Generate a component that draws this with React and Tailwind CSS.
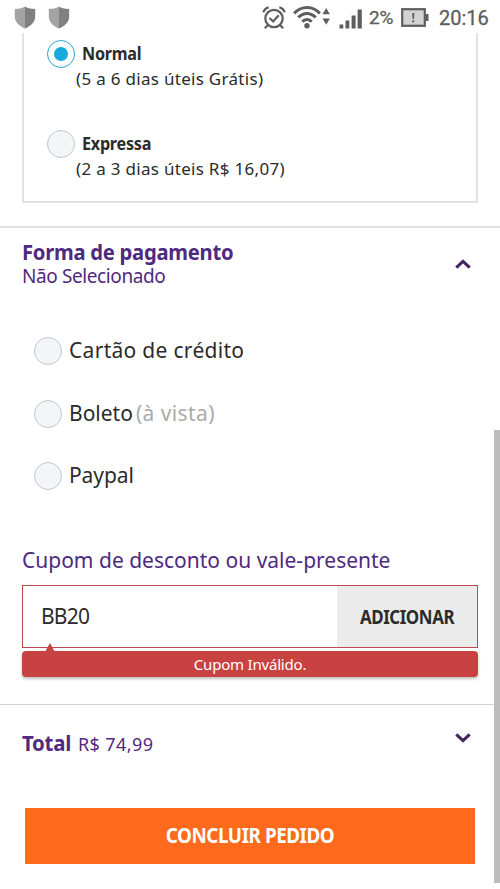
import clsx from "clsx";

const shippingOptions = [
  { name: "Normal", detail: "(5 a 6 dias úteis Grátis)", checked: true },
  { name: "Expressa", detail: "(2 a 3 dias úteis R$ 16,07)", checked: false },
];

const paymentOptions = [
  { name: "Cartão de crédito", style: "tracking-[0.3px]" },
  { name: "Boleto", hint: "(à vista)", style: "tracking-[0px]" },
  { name: "Paypal", style: "tracking-[-0.1px]" },
];

const ShieldIcon = () => (
  <svg width="22" height="23" viewBox="0 0 22 23">
    <path d="M11 0.5C8 2.3 4.5 3 0.8 3v7.5c0 5.2 4 9.5 10.2 12z" fill="#a3a3a3" />
    <path d="M11 0.5c3 1.8 6.5 2.5 10.2 2.5v7.5c0 5.2-4 9.5-10.2 12z" fill="#808080" />
  </svg>
);

const AlarmIcon = () => (
  <svg width="24" height="24" viewBox="0 0 24 24" fill="none" stroke="#5e5e5e" strokeWidth="2.2">
    <circle cx="12" cy="12.5" r="8.7" />
    <path d="M1.3 6.3C2.3 3.6 4.3 1.9 6.7 1.4M22.7 6.3c-1-2.7-3-4.4-5.4-4.9M5.8 19.2l-3 3M18.2 19.2l3 3M7.5 12l3.7 3.5 5.5-6.2" />
  </svg>
);

const WifiIcon = () => (
  <svg width="38" height="24" viewBox="0 0 38 24" fill="none" stroke="#5e5e5e" strokeWidth="3">
    <path d="M1.2 8.4c7-8 18.6-8 25.6 0M5.3 12.6c5-5.5 12.4-5.5 17.4 0M9.3 16.7c2.7-2.9 6.7-2.9 9.4 0" />
    <circle cx="14" cy="20.8" r="2.7" fill="#5e5e5e" stroke="none" />
    <path d="M29.5 9.2 33.2 3l3.7 6.2zM29.5 13.5h7.4l-3.7 6.2z" fill="#5e5e5e" stroke="none" />
  </svg>
);

const SignalIcon = () => (
  <svg width="24" height="20" viewBox="0 0 24 20" fill="#5e5e5e">
    <rect x="0.5" y="15.5" width="3.8" height="4" />
    <rect x="6.5" y="11.5" width="3.8" height="8" />
    <rect x="12.6" y="6.5" width="4" height="13" />
    <rect x="18.6" y="0.5" width="4.2" height="19" />
  </svg>
);

const BatteryIcon = () => (
  <svg width="28" height="20" viewBox="0 0 28 20">
    <rect x="1.2" y="1.2" width="22.6" height="16.6" fill="#d2d2d2" stroke="#5e5e5e" strokeWidth="2.2" />
    <rect x="24.5" y="6" width="3" height="7" fill="#5e5e5e" />
    <path d="M11.2 5h2.2l-.4 6h-1.4zM11.3 12.3h2v2h-2z" fill="#5e5e5e" />
  </svg>
);

const Chevron = ({ up }) => (
  <svg
    width="16"
    height="12"
    viewBox="0 0 16 12"
    className={clsx("shrink-0", up && "rotate-180")}
    fill="none"
    stroke="#432763"
    strokeWidth="3"
  >
    <path d="M1.3 2.3 8 8.7l6.7-6.4" />
  </svg>
);

const Radio = ({ checked }) => (
  <span
    className={clsx(
      "flex size-7 shrink-0 items-center justify-center rounded-full border",
      checked ? "border-[#2aa5cb] bg-white" : "border-[#bcc8d1] bg-[#f4f5f7]"
    )}
  >
    {checked && <span className="size-[14px] rounded-full bg-[#16aadc]" />}
  </span>
);

const StatusBar = () => (
  <header className="flex h-[33px] shrink-0 items-start bg-white text-[#5e5e5e]">
    <div className="flex gap-3 pt-[6px] pl-[14px]">
      <ShieldIcon />
      <ShieldIcon />
    </div>
    <div className="ml-auto flex items-start pr-[11px] font-[Roboto] text-[20px] leading-6">
      <div className="mt-[6px]">
        <AlarmIcon />
      </div>
      <div className="mt-[5px] ml-[7px]">
        <WifiIcon />
      </div>
      <div className="mt-[9px] ml-[8px]">
        <SignalIcon />
      </div>
      <span className="mt-[6px] ml-[6px] w-[26px] text-[19px] tracking-[-0.3px] [-webkit-text-stroke:0.3px]">2%</span>
      <div className="mt-[8px] ml-[6px]">
        <BatteryIcon />
      </div>
      <span className="mt-[6px] ml-[10px] w-[50px] whitespace-nowrap [-webkit-text-stroke:0.3px]">20:16</span>
    </div>
  </header>
);

const Shipping = () => (
  <section className="mx-[22px] h-[170px] border-x-2 border-b-2 border-[#e2e2e2] pt-[7px] pl-[23px]">
    {shippingOptions.map((item) => (
      <div key={item.name} className="flex h-[90px] gap-[7px]">
        <Radio checked={item.checked} />
        <div className="whitespace-nowrap text-[#2b2b2b]">
          <p className="origin-left scale-x-90 text-[18px] leading-[26px] font-bold tracking-[-0.3px]">{item.name}</p>
          <p className="-ml-[6px] text-[17px] leading-[26px] tracking-[0.3px]">{item.detail}</p>
        </div>
      </div>
    ))}
  </section>
);

const Payment = () => (
  <section className="mt-[23px] h-[308px] border-t-2 border-[#e2e2e2] px-[22px] pt-[10px]">
    <div className="flex justify-between pr-[7px]">
      <div className="whitespace-nowrap text-[#4f2a7f]">
        <h2 className="origin-left scale-x-92 text-[22px] leading-[27px] font-bold tracking-[-0.3px]">
          Forma de pagamento
        </h2>
        <p className="text-[19px] leading-[22px] tracking-[-0.4px]">Não Selecionado</p>
      </div>
      <div className="mt-[20px]">
        <Chevron up />
      </div>
    </div>
    <div className="mt-[50px] ml-[12px]">
      {paymentOptions.map((item) => (
        <div key={item.name} className="flex h-[62.5px] items-start gap-[7px] text-[21px] leading-[26px] whitespace-nowrap">
          <Radio />
          <p className={clsx("text-[#2b2b2b]", item.style)}>
            {item.name}
            {item.hint && <span className="ml-[3px] tracking-[0.4px] text-[#ababab]">{item.hint}</span>}
          </p>
        </div>
      ))}
    </div>
  </section>
);

const Coupon = () => (
  <section className="mt-[12px] px-[22px]">
    <h3 className="h-[39px] text-[21px] leading-[28px] whitespace-nowrap text-[#4f2a7f]">
      Cupom de desconto ou vale-presente
    </h3>
    <div className="flex h-[63px] border border-[#c0494f]">
      <div className="flex flex-1 items-center pl-[18px] text-[21px] tracking-[-0.8px] text-[#2b2b2b]">BB20</div>
      <button className="w-[140px] bg-[#ebebeb] text-[20px] font-bold tracking-[-0.5px] text-[#2b2b2b]">
        <span className="block scale-x-[0.845]">ADICIONAR</span>
      </button>
    </div>
    <div className="relative mt-[3px] flex h-[26px] items-center justify-center rounded bg-[#c94242] text-[15px] tracking-[-0.2px] text-white shadow-[0_2px_3px_rgba(0,0,0,0.25)]">
      <span className="absolute -top-[8px] left-[23px] border-x-[5px] border-b-[9px] border-x-transparent border-b-[#c94242]" />
      Cupom Inválido.
    </div>
  </section>
);

const Total = () => (
  <section className="mt-[27px] border-t border-[#d4d4d4] px-[22px] text-[#4f2a7f]">
    <div className="flex h-[103px] items-start justify-between pt-[23px] pr-[7px]">
      <p className="flex items-baseline leading-[28px] whitespace-nowrap">
        <b className="w-[56px] origin-left scale-x-93 text-[22px] tracking-[-0.3px]">Total</b>
        <span className="text-[18px] tracking-[0.4px]">R$ 74,99</span>
      </p>
      <div className="mt-[4px]">
        <Chevron />
      </div>
    </div>
    <button className="mx-[3px] block h-[56px] w-[450px] bg-[#ff6a1c] text-[21px] font-bold tracking-[-0.5px] text-white">
      <span className="block scale-x-[0.897]">CONCLUIR PEDIDO</span>
    </button>
  </section>
);

const App = () => {
  return (
    <main className="relative h-[889px] w-[500px] overflow-hidden bg-white font-['Noto_Sans','Open_Sans',sans-serif]">
      <StatusBar />
      <Shipping />
      <Payment />
      <Coupon />
      <Total />
      <div className="absolute top-[430px] right-0 h-[453px] w-[6px] bg-[#bcbcbc]" />
    </main>
  );
};

export default App;
